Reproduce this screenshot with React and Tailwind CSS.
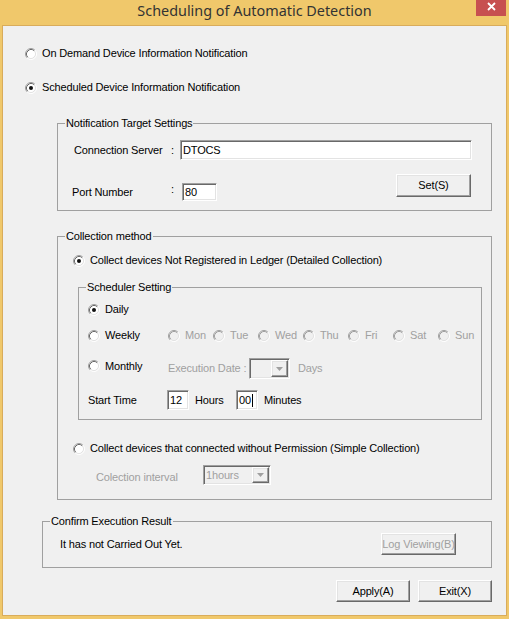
import React from "react";

const sunken =
  "border border-t-[#a0a0a0] border-l-[#a0a0a0] border-r-white border-b-white shadow-[inset_1px_1px_0_#696969,inset_-1px_-1px_0_#e3e3e3]";
const raised =
  "border border-t-white border-l-white border-r-[#696969] border-b-[#696969] shadow-[inset_-1px_-1px_0_#a0a0a0,inset_1px_1px_0_#e3e3e3]";

function RadioDot({ checked = false, disabled = false }) {
  return (
    <svg width="12" height="12" viewBox="0 0 12 12" className="shrink-0">
      <circle cx="6" cy="6" r="4.5" fill={disabled ? "#f0f0f0" : "#fff"} />
      <path d="M9.89 2.11A5.5 5.5 0 0 0 2.11 9.89" stroke="#a0a0a0" fill="none" />
      <path d="M2.11 9.89A5.5 5.5 0 0 0 9.89 2.11" stroke="#fff" fill="none" />
      <path
        d="M9.18 2.82A4.5 4.5 0 0 0 2.82 9.18"
        stroke={disabled ? "#a0a0a0" : "#696969"}
        fill="none"
      />
      <path d="M2.82 9.18A4.5 4.5 0 0 0 9.18 2.82" stroke="#e3e3e3" fill="none" />
      {checked && <circle cx="6" cy="6" r="2" fill="#111" />}
    </svg>
  );
}

function Radio({ label, checked, disabled, className = "" }) {
  return (
    <div className={`flex items-center h-[13px] ${className}`}>
      <RadioDot checked={checked} disabled={disabled} />
      <span className={`ml-[5px] whitespace-nowrap ${disabled ? "text-[#a0a0a0]" : ""}`}>
        {label}
      </span>
    </div>
  );
}

function Group({ title, className = "", children }) {
  return (
    <fieldset className={`min-w-0 border border-[#a0a0a0] ${className}`}>
      <legend className="ml-[7px] px-[1px]">{title}</legend>
      {children}
    </fieldset>
  );
}

function DropArrow() {
  return (
    <div className={`w-[17px] h-full ${raised} bg-[#f0f0f0] flex items-center justify-center`}>
      <svg width="7" height="4" viewBox="0 0 7 4">
        <path d="M0 0h7L3.5 4z" fill="#a0a0a0" />
      </svg>
    </div>
  );
}

const days = ["Mon", "Tue", "Wed", "Thu", "Fri", "Sat", "Sun"];

export default function App() {
  return (
    <div className="w-[509px] h-[619px] bg-[#f0c86b] flex flex-col overflow-hidden font-['Liberation_Sans',Arial,sans-serif] text-[11px] leading-[13px] tracking-[-0.15px] text-black">
      <div className="h-[25px] shrink-0 grid grid-cols-[1fr_auto_1fr]">
        <div />
        <div className="self-start pt-[1px] font-['Noto_Sans',sans-serif] text-[14.4px] leading-[20px] tracking-normal text-[#333]">
          Scheduling of Automatic Detection
        </div>
        <div className="flex justify-end items-start pr-[3px]">
          <div className="w-[30px] h-[16px] bg-[#c75050] flex justify-center pt-[2px]">
            <svg width="9" height="9" viewBox="0 0 9 9">
              <path d="M1 1l7 7M8 1L1 8" stroke="#fff" strokeWidth="1.8" />
            </svg>
          </div>
        </div>
      </div>

      <div className="mx-[2px] mb-[3px] flex-1 border border-[#d9ac5b] bg-[#f0f0f0] flex flex-col">
        <Radio className="mt-[21px] ml-[22px]" label="On Demand Device Information Notification" />
        <Radio
          className="mt-[21px] ml-[22px]"
          label="Scheduled Device Information Notification"
          checked
        />

        <Group title="Notification Target Settings" className="mt-[23px] ml-[54px] w-[435px]">
          <div className="mt-[10px] pl-[16px] flex items-center h-[20px]">
            <span className="w-[97px] whitespace-nowrap">Connection Server</span>
            <span className="w-[9px]">:</span>
            <div className={`w-[292px] h-[20px] bg-white ${sunken} pl-[2px] flex items-center`}>
              DTOCS
            </div>
          </div>
          <div className="mt-[14px] pr-[20px] pb-[9px] flex justify-between items-start">
            <div className="mt-[9px] ml-[14px] flex items-center">
              <span className="w-[99px] whitespace-nowrap">Port Number</span>
              <span className="w-[11px] mb-[5px]">:</span>
              <div className={`w-[35px] h-[18px] bg-white ${sunken} pl-[2px] flex items-center`}>
                80
              </div>
            </div>
            <button className={`w-[75px] h-[23px] ${raised} bg-[#f0f0f0] flex items-center justify-center`}>
              Set(S)
            </button>
          </div>
        </Group>

        <Group title="Collection method" className="mt-[19px] ml-[54px] w-[435px]">
          <Radio
            className="mt-[11px] ml-[15px]"
            label="Collect devices Not Registered in Ledger (Detailed Collection)"
            checked
          />

          <Group title="Scheduler Setting" className="mt-[14px] ml-[20px] w-[404px]">
            <Radio className="mt-[9px] ml-[9px]" label="Daily" checked />

            <div className="mt-[13px] ml-[9px] flex items-center">
              <div className="w-[80px] shrink-0">
                <Radio label="Weekly" />
              </div>
              {days.map((d) => (
                <div key={d} className="w-[45px] shrink-0">
                  <Radio label={d} disabled />
                </div>
              ))}
            </div>

            <div className="mt-[16px] ml-[9px] h-[21px] flex items-center">
              <div className="w-[80px] mb-[5px]">
                <Radio label="Monthly" />
              </div>
              <span className="w-[81px] whitespace-nowrap text-[#a0a0a0]">Execution Date :</span>
              <div className={`w-[41px] h-[21px] ${sunken} bg-[#f0f0f0] p-[1px] flex justify-end`}>
                <DropArrow />
              </div>
              <span className="ml-[8px] text-[#a0a0a0]">Days</span>
            </div>

            <div className="mt-[11px] ml-[9px] pb-[9px] flex items-center">
              <span className="w-[79px]">Start Time</span>
              <div className={`w-[22px] h-[20px] bg-white ${sunken} pl-[2px] flex items-center`}>
                12
              </div>
              <span className="ml-[6px] w-[41px]">Hours</span>
              <div className={`w-[22px] h-[20px] bg-white ${sunken} pl-[2px] flex items-center`}>
                00
                <span className="ml-[1px] w-[1px] h-[13px] bg-black" />
              </div>
              <span className="ml-[6px]">Minutes</span>
            </div>
          </Group>

          <Radio
            className="mt-[22px] ml-[15px]"
            label="Collect devices that connected without Permission (Simple Collection)"
          />

          <div className="mt-[10px] pl-[38px] pb-[14px] flex items-center">
            <span className="w-[107px] mt-[4px] whitespace-nowrap text-[#a0a0a0]">
              Colection interval
            </span>
            <div className={`w-[68px] h-[20px] ${sunken} bg-[#f0f0f0] p-[1px] flex`}>
              <span className="flex-1 pl-[1px] flex items-center text-[#a0a0a0]">1hours</span>
              <DropArrow />
            </div>
          </div>
        </Group>

        <Group title="Confirm Execution Result" className="mt-[15px] ml-[39px] w-[450px]">
          <div className="mt-[5px] pl-[17px] pr-[35px] pb-[12px] flex items-center justify-between">
            <span>It has not Carried Out Yet.</span>
            <button
              className={`w-[75px] h-[22px] ${raised} bg-[#f0f0f0] flex items-center justify-center whitespace-nowrap overflow-hidden text-[#a0a0a0]`}
            >
              Log Viewing(B)
            </button>
          </div>
        </Group>

        <div className="mt-[12px] pr-[14px] flex justify-end gap-[8px]">
          <button className={`w-[74px] h-[22px] ${raised} bg-[#f0f0f0] flex items-center justify-center`}>
            Apply(A)
          </button>
          <button className={`w-[74px] h-[22px] ${raised} bg-[#f0f0f0] flex items-center justify-center`}>
            Exit(X)
          </button>
        </div>
      </div>
    </div>
  );
}
